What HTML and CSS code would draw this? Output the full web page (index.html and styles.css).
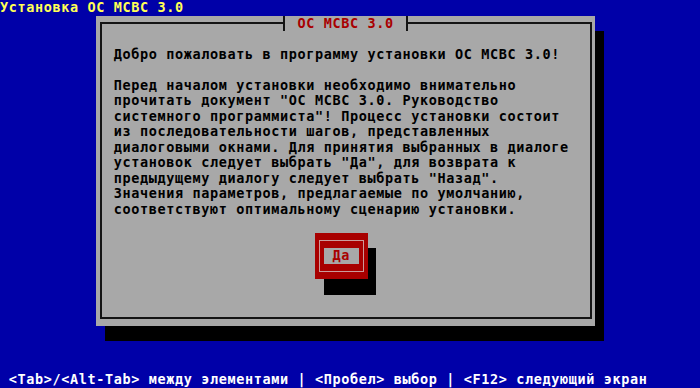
FILE: index.html
```
<!DOCTYPE html>
<html lang="ru">
<head>
<meta charset="utf-8">
<title>Установка ОС МСВС 3.0</title>
<link rel="stylesheet" href="styles.css">
</head>
<body>
<div class="screen">
  <div class="top-title">Установка ОС МСВС 3.0</div>
  <div class="shadow"></div>
  <div class="dialog">
    <div class="frame"></div>
    <div class="dialog-title">ОС МСВС 3.0</div>
    <div class="message">Добро пожаловать в программу установки ОС МСВС 3.0!

Перед началом установки необходимо внимательно
прочитать документ "ОС МСВС 3.0. Руководство
системного программиста"! Процесс установки состоит
из последовательности шагов, представленных
диалоговыми окнами. Для принятия выбранных в диалоге
установок следует выбрать "Да", для возврата к
предыдущему диалогу следует выбрать "Назад".
Значения параметров, предлагаемые по умолчанию,
соответствуют оптимальному сценарию установки.</div>
    <div class="btn-shadow"></div>
    <div class="button">
      <div class="btn-frame"></div>
      <div class="btn-label">Да</div>
    </div>
  </div>
  <div class="help">&lt;Tab&gt;/&lt;Alt-Tab&gt; между элементами | &lt;Пробел&gt; выбор | &lt;F12&gt; следующий экран</div>
</div>
</body>
</html>
```
FILE: styles.css
```
html, body {
  margin: 0;
  padding: 0;
  background: #0000a8;
}

.screen {
  width: 700px;
  height: 388px;
  overflow: hidden;
  background: #0000a8;
  display: grid;
  grid-template-columns: repeat(80, 8.75px);
  grid-template-rows: repeat(25, 15.52px);
  font-family: "DejaVu Sans Mono", "Liberation Mono", monospace;
  font-weight: bold;
  font-size: 13.5px;
  letter-spacing: 0.622px;
  line-height: 15.52px;
  white-space: pre;
}

.top-title {
  grid-row: 1;
  grid-column: 1 / -1;
  color: #ffff55;
}

.shadow {
  grid-column: 13 / span 57;
  grid-row: 3 / span 20;
  background: #000;
}

.dialog {
  grid-column: 12 / span 57;
  grid-row: 2 / span 20;
  background: #a8a8a8;
  display: grid;
  grid-template-columns: repeat(57, 8.75px);
  grid-template-rows: repeat(20, 15.52px);
  color: #000;
}

.frame {
  grid-column: 1 / -1;
  grid-row: 1 / -1;
  margin: 6.76px 3.375px;
  border: 2px solid #141414;
}

.dialog-title {
  grid-row: 1;
  grid-column: 22 / 37;
  margin: 0 3.375px;
  padding-left: 12.125px;
  border-left: 2px solid #141414;
  border-right: 2px solid #141414;
  background: #a8a8a8;
  color: #a80000;
  z-index: 1;
}

.message {
  grid-column: 3 / span 54;
  grid-row: 3 / span 11;
}

.btn-shadow {
  grid-column: 27 / span 6;
  grid-row: 16 / span 3;
  background: #000;
}

.button {
  grid-column: 26 / span 6;
  grid-row: 15 / span 3;
  background: #a80000;
  display: grid;
  grid-template-columns: repeat(6, 8.75px);
  grid-template-rows: repeat(3, 15.52px);
  z-index: 1;
}

.btn-frame {
  grid-column: 1 / -1;
  grid-row: 1 / -1;
  margin: 7px 3.8px;
  border: 1.5px solid #cc9a9a;
}

.btn-label {
  grid-column: 2 / span 4;
  grid-row: 2;
  background: #a8a8a8;
  color: #a80000;
  padding-left: 8.75px;
  z-index: 1;
}

.help {
  grid-row: 25;
  grid-column: 2 / -1;
  color: #ffffff;
}
```
